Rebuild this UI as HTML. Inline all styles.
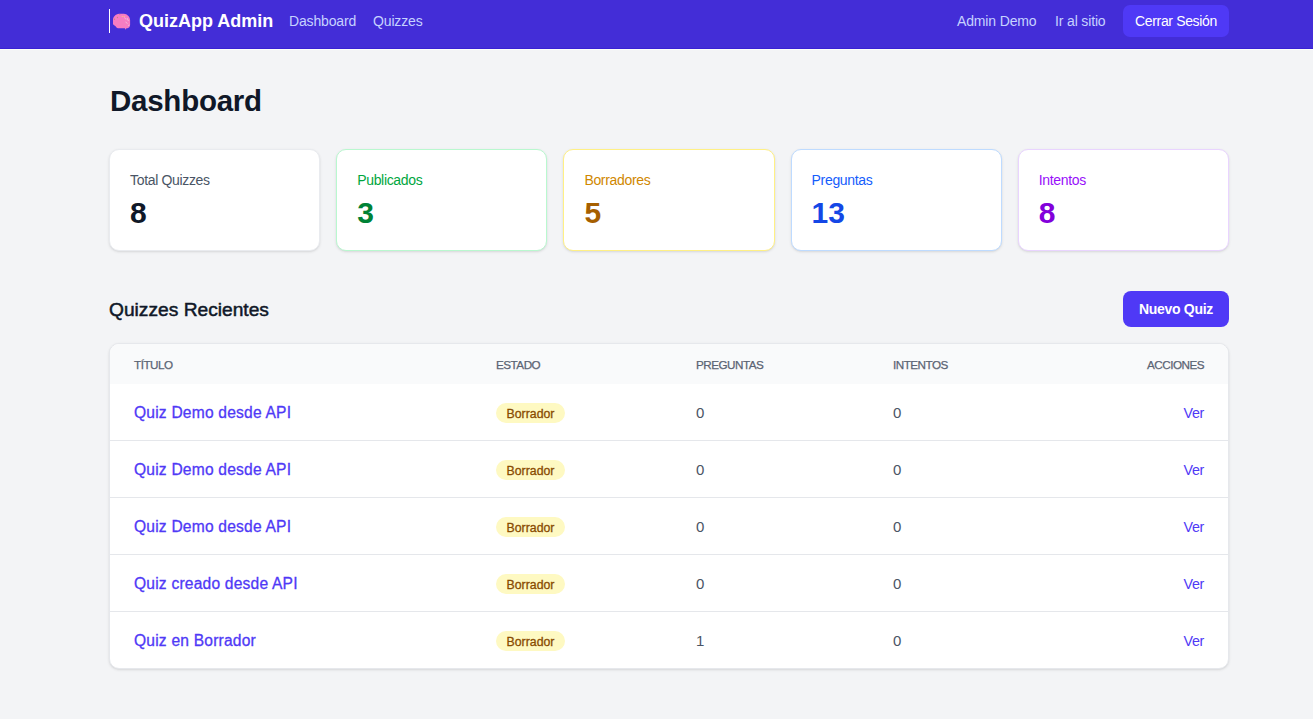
<!DOCTYPE html>
<html lang="es">
<head>
<meta charset="utf-8">
<title>QuizApp Admin - Dashboard</title>
<style>
*{box-sizing:border-box;margin:0;padding:0}
html,body{width:1313px;height:719px;overflow:hidden}
body{background:#F3F4F6;font-family:"Liberation Sans",sans-serif;color:#101828;position:relative;-webkit-font-smoothing:antialiased}
.abs{position:absolute;white-space:nowrap}
nav{position:absolute;left:0;top:0;width:1313px;height:49px;background:#432DD7;border-bottom:1px solid #3921D3}
.ring{position:absolute;left:0;top:49px;width:1313px;height:1px;background:#FCFDF9}
.caret{position:absolute;left:109px;top:9px;width:1px;height:24px;background:#fff}
.brand{left:139px;top:10px;font-size:18px;line-height:22px;font-weight:700;color:#fff}
.nl{top:12px;font-size:14px;line-height:18px;letter-spacing:-0.15px;color:#C6D2FF}
.logout{position:absolute;left:1123px;top:5px;width:106px;height:32px;background:#4F39F6;border-radius:7px;color:#fff;font-size:14px;line-height:33px;letter-spacing:-0.35px;text-align:center}
h1{left:110px;top:83px;font-size:29.5px;line-height:36px;font-weight:700;letter-spacing:-0.25px;color:#101828}
.card{position:absolute;top:149px;width:211.2px;height:102px;background:#fff;border:1px solid #F3F4F6;border-radius:10px;box-shadow:0 1px 3px 0 rgba(0,0,0,.1),0 1px 2px -1px rgba(0,0,0,.1)}
.card .lbl{position:absolute;left:20px;top:22px;font-size:14px;line-height:16px;letter-spacing:-0.33px;white-space:nowrap}
.card .num{position:absolute;left:20px;top:45px;font-size:30px;line-height:36px;font-weight:700;white-space:nowrap}
h2{left:109px;top:299px;font-size:19.2px;line-height:22px;font-weight:400;color:#101828;-webkit-text-stroke:0.5px #101828}
.newq{position:absolute;left:1123px;top:291px;width:106px;height:36px;background:#4F39F6;border-radius:8px;color:#fff;font-size:14px;line-height:37px;font-weight:700;letter-spacing:-0.3px;text-align:center}
.table{position:absolute;left:109px;top:343px;width:1120px;height:326px;background:#fff;border:1px solid #E6E8EC;border-radius:10px;box-shadow:0 1px 3px 0 rgba(0,0,0,.1),0 1px 2px -1px rgba(0,0,0,.1);overflow:hidden}
.thead{position:absolute;left:0;top:0;width:1118px;height:40px;background:#F9FAFB}
.th{position:absolute;top:13px;font-size:11.7px;line-height:15px;letter-spacing:-0.5px;color:#5B6474;text-transform:uppercase;white-space:nowrap;-webkit-text-stroke:0.25px #5B6474}
.row{position:absolute;left:0;width:1118px;height:57px;border-bottom:1px solid #E5E7EB}
.row:last-child{border-bottom:0}
.td{position:absolute;white-space:nowrap}
.t1{left:24px;top:19px;font-size:15.6px;line-height:20px;letter-spacing:0.2px;color:#4F39F6;-webkit-text-stroke:0.3px #4F39F6}
.badge{position:absolute;left:386px;top:19px;width:69px;height:20px;border-radius:10px;background:#FEF9C2;color:#894B00;font-size:12.3px;line-height:22px;text-align:center;-webkit-text-stroke:0.3px #894B00}
.n{top:20px;font-size:15px;line-height:18px;color:#4A5565}
.c3{left:586px}
.c4{left:783px}
.ver{right:24px;top:20px;font-size:14.3px;line-height:18px;letter-spacing:-0.35px;color:#4F39F6}
</style>
</head>
<body>
<div class="ring"></div>
<nav>
  <div class="caret"></div>
  <svg style="position:absolute;left:0;top:0" width="200" height="49" viewBox="0 0 200 49"><path d="M113 24.3L113 20C113 17 115.3 14.2 119.2 13.8L123.8 13.8C127.2 14 129.8 16.6 130.1 20L130.1 24.8C130 26.8 129 28 127.5 28.3L126.4 28.3L125.6 29.8L124.9 28.3L118 28.3C116.9 28.1 116.1 27.2 115.6 26.2C114.6 25.7 113.6 25.1 113 24.3Z" fill="#F77DC2"/><path d="M124.5 17.5L126 19.5M127 18L128.5 21M125.5 22L127.5 23.5M128 25.5L129.5 25" stroke="#F3B8DA" stroke-width="1" fill="none"/><circle cx="122.3" cy="16.5" r="0.6" fill="#F6D27A"/><circle cx="124.3" cy="16.5" r="0.6" fill="#F6D27A"/><circle cx="117.5" cy="17.5" r="0.7" fill="#C9877A"/><circle cx="119.8" cy="14.5" r="0.55" fill="#C9877A"/><circle cx="114.5" cy="19.3" r="0.7" fill="#C9877A"/></svg>
  <div class="abs brand">QuizApp Admin</div>
  <div class="abs nl" style="left:289px">Dashboard</div>
  <div class="abs nl" style="left:373px">Quizzes</div>
  <div class="abs nl" style="left:957px">Admin Demo</div>
  <div class="abs nl" style="left:1055px">Ir al sitio</div>
  <div class="logout">Cerrar Sesión</div>
</nav>

<h1 class="abs">Dashboard</h1>

<div class="card" style="left:109px;border-color:#E9EBEF"><div class="lbl" style="color:#4A5565">Total Quizzes</div><div class="num" style="color:#101828">8</div></div>
<div class="card" style="left:336.2px;border-color:#B9F8CF"><div class="lbl" style="color:#00A63E">Publicados</div><div class="num" style="color:#008236">3</div></div>
<div class="card" style="left:563.4px;border-color:#FFF085"><div class="lbl" style="color:#D08700">Borradores</div><div class="num" style="color:#A65F00">5</div></div>
<div class="card" style="left:790.6px;border-color:#BEDBFF"><div class="lbl" style="color:#155DFC">Preguntas</div><div class="num" style="color:#1447E6">13</div></div>
<div class="card" style="left:1017.8px;border-color:#E9D4FF"><div class="lbl" style="color:#9810FA">Intentos</div><div class="num" style="color:#8200DB">8</div></div>

<h2 class="abs">Quizzes Recientes</h2>
<div class="newq">Nuevo Quiz</div>

<div class="table">
  <div class="thead">
    <div class="th" style="left:24px">Título</div>
    <div class="th" style="left:386px">Estado</div>
    <div class="th" style="left:586px">Preguntas</div>
    <div class="th" style="left:783px">Intentos</div>
    <div class="th" style="right:24px">Acciones</div>
  </div>
  <div class="row" style="top:40px"><div class="td t1">Quiz Demo desde API</div><div class="badge">Borrador</div><div class="td n c3">0</div><div class="td n c4">0</div><div class="td ver">Ver</div></div>
  <div class="row" style="top:97px"><div class="td t1">Quiz Demo desde API</div><div class="badge">Borrador</div><div class="td n c3">0</div><div class="td n c4">0</div><div class="td ver">Ver</div></div>
  <div class="row" style="top:154px"><div class="td t1">Quiz Demo desde API</div><div class="badge">Borrador</div><div class="td n c3">0</div><div class="td n c4">0</div><div class="td ver">Ver</div></div>
  <div class="row" style="top:211px"><div class="td t1">Quiz creado desde API</div><div class="badge">Borrador</div><div class="td n c3">0</div><div class="td n c4">0</div><div class="td ver">Ver</div></div>
  <div class="row" style="top:268px"><div class="td t1">Quiz en Borrador</div><div class="badge">Borrador</div><div class="td n c3">1</div><div class="td n c4">0</div><div class="td ver">Ver</div></div>
</div>
</body>
</html>
